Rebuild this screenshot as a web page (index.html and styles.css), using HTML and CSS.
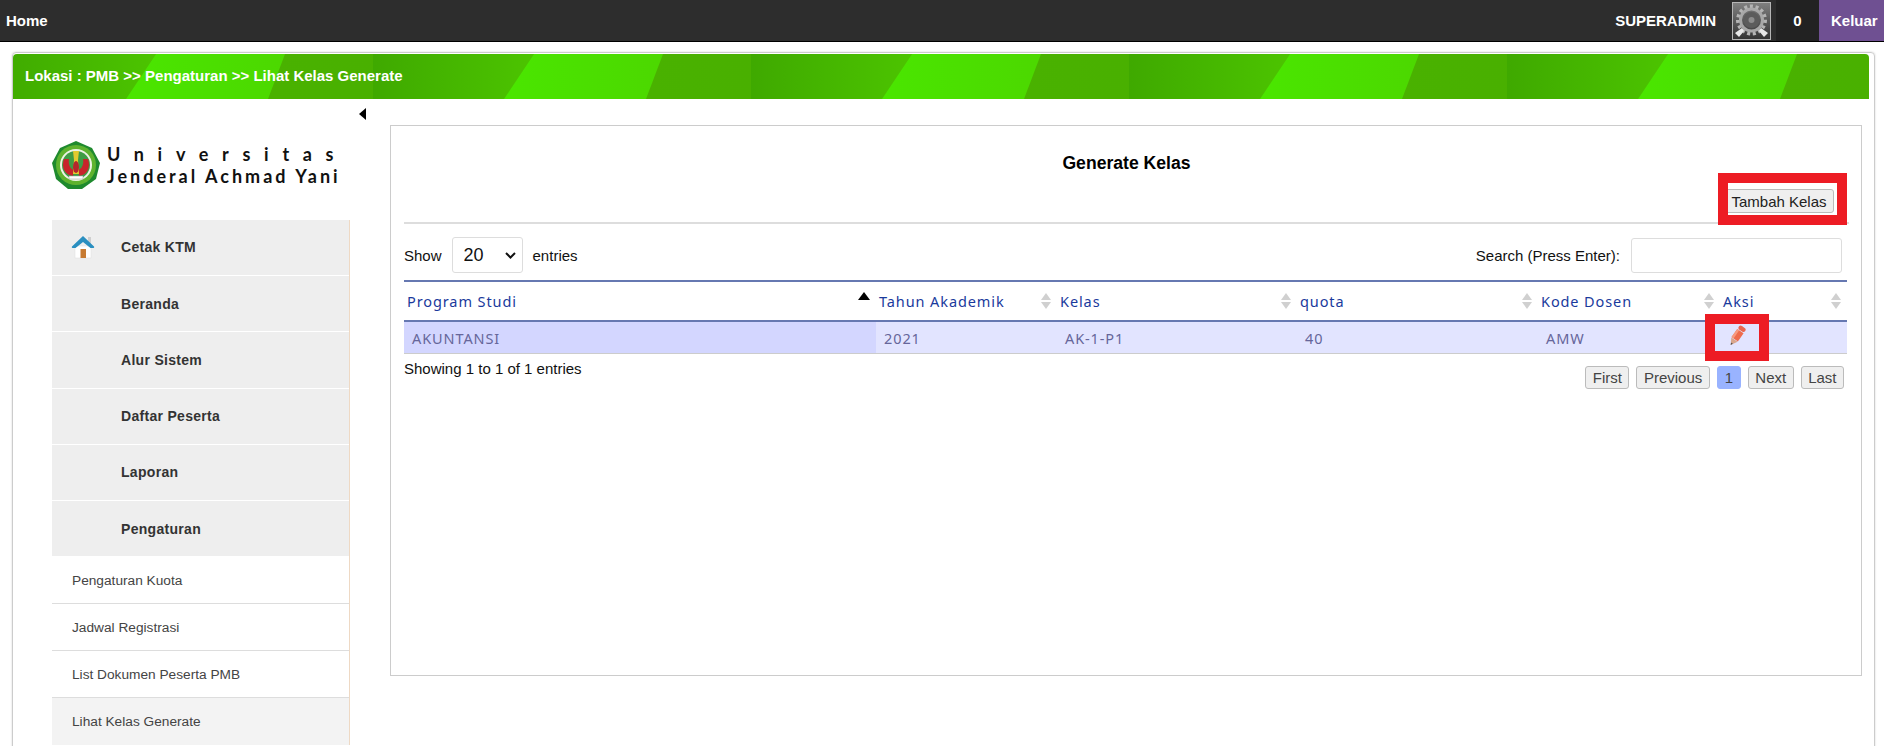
FILE: index.html
```html
<!DOCTYPE html>
<html lang="en">

<head>
   <meta charset="UTF-8">
   <meta name="viewport" content="width=device-width, initial-scale=1.0">
   <title>Lihat Kelas Generate</title>
   <link rel="stylesheet" href="styles.css">
</head>

<body>
   <header class="topbar">
      <a class="home-link">Home</a>
      <div class="user-area">
         <span class="username">SUPERADMIN</span>
         <svg class="gear" width="39" height="38" viewBox="0 0 39 38">
            <defs>
               <linearGradient id="gearBg" x1="0" y1="0" x2="0" y2="1">
                  <stop offset="0" stop-color="#808080" />
                  <stop offset="1" stop-color="#333" />
               </linearGradient>
            </defs>
            <rect x="0.5" y="0.5" width="38" height="37" fill="url(#gearBg)" stroke="#b5b5b5" />
            <circle cx="19.5" cy="18" r="13.5" fill="none" stroke="#b4b4b4" stroke-width="4" stroke-dasharray="3 2.6" />
            <circle cx="19.5" cy="18" r="11" fill="none" stroke="#a8a8a8" stroke-width="3" />
            <circle cx="19.5" cy="18" r="8" fill="#5c5c5c" />
            <circle cx="19.5" cy="18" r="3" fill="#8c8c8c" />
            <path d="M3 31l7-5 2 3-5 6zM36 31l-7-5-2 3 5 6z" fill="#e8e8e8" />
         </svg>
         <span class="notif">0</span>
         <a class="logout">Keluar</a>
      </div>
   </header>

   <div class="card">
      <div class="breadcrumb">Lokasi : PMB &gt;&gt; Pengaturan &gt;&gt; Lihat Kelas Generate</div>

      <div class="main">
         <aside class="side">
            <div class="side-toggle"><span class="arrow-left"></span></div>
            <div class="logo">
               <svg width="50" height="50" viewBox="0 0 50 50">
                  <polygon points="25,1 41,8 49,23 45,39 31,49 17,49 5,39 1,23 9,8" fill="#1f8a2e" />
                  <circle cx="25" cy="25" r="20" fill="#5fb32f" />
                  <circle cx="25" cy="25" r="16" fill="#eef3e6" />
                  <circle cx="25" cy="25" r="14" fill="#3f9c45" />
                  <path d="M13 19c-3 9 1 16 9 17l1-6c-4-1-6-6-5-11zM37 19c3 9-1 16-9 17l-1-6c4-1 6-6 5-11z" fill="#c8242b" />
                  <path d="M22 11h6l-1 9 1 14h-6l1-14z" fill="#e3c92f" />
                  <ellipse cx="25" cy="27" rx="3" ry="6" fill="#b3262b" />
                  <rect x="18" y="36" width="14" height="3" fill="#fff" stroke="#9a9a9a" stroke-width="0.5" />
               </svg>
               <div class="logo-text">
                  <div class="logo-top">Universitas</div>
                  <div class="logo-bottom">Jenderal Achmad Yani</div>
               </div>
            </div>

            <nav class="menu">
               <a class="menu-item">
                  <svg class="menu-icon" width="24" height="24" viewBox="0 0 24 24">
                     <rect x="17" y="2" width="3" height="7" fill="#cfcfcf" />
                     <rect x="4" y="11" width="16" height="12" fill="#fff" stroke="#ddd" stroke-width="0.5" />
                     <rect x="9.500" y="14" width="5.500" height="9" fill="#c77b32" />
                     <path d="M12 1L1 11.500c-.6.8 0 1.500 1 1.500h2.500L12 7l7.500 6H22c1 0 1.600-.7 1-1.500z" fill="#2a8fc0" />
                  </svg>
                  Cetak KTM
               </a>
               <a class="menu-item">Beranda</a>
               <a class="menu-item">Alur Sistem</a>
               <a class="menu-item">Daftar Peserta</a>
               <a class="menu-item">Laporan</a>
               <a class="menu-item">Pengaturan</a>
               <a class="sub-item">Pengaturan Kuota</a>
               <a class="sub-item">Jadwal Registrasi</a>
               <a class="sub-item">List Dokumen Peserta PMB</a>
               <a class="sub-item active">Lihat Kelas Generate</a>
            </nav>
         </aside>

         <section class="content">
            <h2 class="title">Generate Kelas</h2>
            <div class="toolbar">
               <span class="mark mark-btn"><button class="btn" type="button">Tambah Kelas</button></span>
            </div>
            <div class="divider"></div>

            <div class="controls">
               <label class="length">Show
                  <select>
                     <option>20</option>
                  </select>
                  entries
               </label>
               <label class="search">Search (Press Enter):
                  <input type="text">
               </label>
            </div>

            <table class="data">
               <colgroup>
                  <col class="c1">
                  <col class="c2">
                  <col class="c3">
                  <col class="c4">
                  <col class="c5">
                  <col class="c6">
               </colgroup>
               <thead>
                  <tr>
                     <th>
                        <div class="th-in">Program Studi<span class="sort-asc"></span></div>
                     </th>
                     <th>
                        <div class="th-in">Tahun Akademik<span class="sort"></span></div>
                     </th>
                     <th>
                        <div class="th-in">Kelas<span class="sort"></span></div>
                     </th>
                     <th>
                        <div class="th-in">quota<span class="sort"></span></div>
                     </th>
                     <th>
                        <div class="th-in">Kode Dosen<span class="sort"></span></div>
                     </th>
                     <th>
                        <div class="th-in">Aksi<span class="sort"></span></div>
                     </th>
                  </tr>
               </thead>
               <tbody>
                  <tr>
                     <td class="sorted">AKUNTANSI</td>
                     <td>2021</td>
                     <td>AK-1-P1</td>
                     <td>40</td>
                     <td>AMW</td>
                     <td>
                        <span class="mark mark-edit">
                           <svg class="pencil" width="22" height="22" viewBox="0 0 20 20">
                              <g transform="rotate(35 10 10)">
                                 <rect x="6.500" y="0" width="7" height="4" rx="2" fill="#e8664f" />
                                 <rect x="6.500" y="4.600" width="7" height="9" fill="#ee6b4d" />
                                 <rect x="6.500" y="4.600" width="2.200" height="9" fill="#f79a80" />
                                 <path d="M6.500 14h7L10 20z" fill="#d9a58c" />
                                 <path d="M9 18h2l-1 2z" fill="#555" />
                              </g>
                           </svg>
                        </span>
                     </td>
                  </tr>
               </tbody>
            </table>

            <div class="table-foot">
               <div class="info">Showing 1 to 1 of 1 entries</div>
               <div class="pages">
                  <a class="page">First</a>
                  <a class="page">Previous</a>
                  <a class="page current">1</a>
                  <a class="page">Next</a>
                  <a class="page">Last</a>
               </div>
            </div>
         </section>
      </div>
   </div>
</body>

</html>
```

FILE: styles.css
```css
html,
body {
   height: 100%;
   overflow: hidden;
}

body {
   margin: 0;
   font-family: "Liberation Sans", Arial, sans-serif;
   font-size: 15px;
   color: #111;
   background-color: #fff;
}

.topbar {
   display: flex;
   justify-content: space-between;
   align-items: center;
   height: 41px;
   border-bottom: 1px solid #000;
   background-color: #2d2d2d;
   color: #fff;
   font-weight: bold;
}

.home-link {
   padding-left: 6px;
}

.user-area {
   display: flex;
   align-items: center;
   height: 100%;
}

.username {
   margin-right: 16px;
}

.gear {
   margin-right: 5px;
}

.notif {
   display: flex;
   justify-content: center;
   align-items: center;
   width: 43px;
   height: 100%;
   background-color: #222;
}

.logout {
   display: flex;
   align-items: center;
   width: 65px;
   height: 100%;
   padding-left: 12px;
   box-sizing: border-box;
   background-color: #6f5092;
}

.card {
   margin: 10px 9px 0 12px;
   min-height: 800px;
   padding: 1px 5px 0 0;
   border: 1px solid #ccc;
   border-radius: 4px;
   box-shadow: 0 0 2px rgba(0, 0, 0, 0.2);
}

.breadcrumb {
   height: 45px;
   padding-left: 12px;
   line-height: 43px;
   font-weight: bold;
   color: #fff;
   border-radius: 4px 4px 0 0;
   background-color: #4ab400;
   background-image: url("data:image/svg+xml,%3Csvg xmlns='http://www.w3.org/2000/svg' width='378' height='45'%3E%3Cdefs%3E%3ClinearGradient id='a'%3E%3Cstop offset='0' stop-color='%233fa900'/%3E%3Cstop offset='1' stop-color='%234cc400'/%3E%3C/linearGradient%3E%3ClinearGradient id='b'%3E%3Cstop offset='0' stop-color='%234ae600'/%3E%3Cstop offset='1' stop-color='%234cd800'/%3E%3C/linearGradient%3E%3ClinearGradient id='c'%3E%3Cstop offset='0' stop-color='%234ab600'/%3E%3Cstop offset='1' stop-color='%2349b000'/%3E%3C/linearGradient%3E%3C/defs%3E%3Crect width='378' height='45' fill='url(%23c)'/%3E%3Cpolygon points='0,0 161,0 131,45 0,45' fill='url(%23a)'/%3E%3Cpolygon points='161,0 290,0 273,45 131,45' fill='url(%23b)'/%3E%3C/svg%3E");
   background-repeat: repeat-x;
   background-position: -18px 0;
}

.main {
   display: flex;
   align-items: flex-start;
}

.side {
   flex: none;
   width: 377px;
   padding-left: 39px;
   box-sizing: border-box;
}

.side-toggle {
   display: flex;
   height: 32px;
   padding: 9px 0 0 307px;
   box-sizing: border-box;
}

.arrow-left {
   width: 0;
   height: 0;
   border-top: 6px solid transparent;
   border-bottom: 6px solid transparent;
   border-right: 7px solid #000;
}

.logo {
   display: flex;
   align-items: center;
   gap: 6px;
   height: 68px;
   margin-bottom: 21px;
   margin-left: -1px;
   color: #111;
   font-family: Lato, sans-serif;
   font-size: 18px;
   line-height: 22px;
   font-weight: bold;
   white-space: nowrap;
}

.logo-top {
   letter-spacing: 13.7px;
}

.logo-bottom {
   letter-spacing: 3px;
}

.menu {
   width: 298px;
   border-right: 1px solid #eed9c4;
   box-sizing: border-box;
}

.menu-item {
   display: flex;
   align-items: center;
   height: 56.2px;
   padding-left: 69px;
   box-sizing: border-box;
   border-bottom: 1px solid #fff;
   background-color: #eee;
   color: #333;
   font-weight: bold;
   font-size: 14px;
   letter-spacing: 0.3px;
}

.menu-item:first-child {
   padding-bottom: 2px;
}

.menu-icon {
   margin-left: -50px;
   margin-right: 26px;
}

.sub-item {
   display: flex;
   align-items: center;
   height: 47px;
   padding-left: 20px;
   box-sizing: border-box;
   border-bottom: 1px solid #ddd;
   color: #444;
   font-size: 13.7px;
}

.sub-item.active {
   background-color: #f3f3f3;
   border-bottom: 0;
}

.content {
   flex: none;
   width: 1472px;
   height: 551px;
   margin-top: 26px;
   padding: 0 12px 0 13px;
   box-sizing: border-box;
   border: 1px solid #ccc;
}

.title {
   margin: 27px 0 0;
   font-size: 17.6px;
   line-height: 20px;
   text-align: center;
   color: #000;
}

.toolbar {
   display: flex;
   justify-content: flex-end;
   margin-top: 16px;
   padding-right: 15px;
}

.mark {
   position: relative;
   display: inline-block;
}

.mark::after {
   content: "";
   position: absolute;
   border: 10px solid #ed1c24;
   z-index: 2;
}

.mark-btn::after {
   top: -16px;
   right: -13px;
   bottom: -12px;
   left: -6px;
}

.mark-edit {
   margin-left: -2px;
   line-height: 0;
}

.mark-edit::after {
   top: -11px;
   right: -21px;
   bottom: -14px;
   left: -21px;
}

.btn {
   display: block;
   width: 110px;
   height: 24px;
   padding: 0;
   border: 1px solid #bbb;
   border-radius: 3px;
   background-color: #efefef;
   color: #222;
   font-family: inherit;
   font-size: 15px;
}

.divider {
   height: 2px;
   margin-top: 9px;
   background-color: #ddd;
}

.controls {
   display: flex;
   justify-content: space-between;
   height: 36px;
   margin-top: 13px;
   align-items: center;
   padding-right: 7px;
}

.length,
.search {
   display: flex;
   align-items: center;
}

.length select {
   width: 71px;
   height: 36px;
   margin: 0 10px;
   padding-left: 11px;
   border: 1px solid #ddd;
   border-radius: 3px;
   appearance: none;
   background: #fff url("data:image/svg+xml,%3Csvg xmlns='http://www.w3.org/2000/svg' width='11' height='7'%3E%3Cpath d='M1 1l4.500 4.500L10 1' fill='none' stroke='%23111' stroke-width='2'/%3E%3C/svg%3E") no-repeat right 6px center;
   color: #111;
   font-family: inherit;
   font-size: 18px;
}

.search input {
   width: 211px;
   height: 35px;
   margin-left: 11px;
   padding: 0;
   box-sizing: border-box;
   border: 1px solid #ddd;
   border-radius: 3px;
}

.data {
   width: 1443px;
   margin-top: 7px;
   table-layout: fixed;
   border-collapse: collapse;
   font-family: "Noto Sans", sans-serif;
   font-size: 14.5px;
   letter-spacing: 0.9px;
}

.c1 {
   width: 472px;
}

.c2 {
   width: 181px;
}

.c3 {
   width: 240px;
}

.c4 {
   width: 241px;
}

.c5 {
   width: 182px;
}

.c6 {
   width: 127px;
}

.data th {
   height: 38px;
   padding: 0 3px;
   border-top: 2px solid #6678b1;
   border-bottom: 2px solid #6678b1;
   font-weight: normal;
   text-align: left;
   color: #1a3a9c;
}

.th-in {
   display: flex;
   justify-content: space-between;
   align-items: center;
}

.sort,
.sort-asc {
   display: block;
   width: 10px;
   margin-right: 3px;
}

.sort-asc {
   width: 12px;
}

.sort::before,
.sort::after {
   content: "";
   display: block;
   width: 0;
   height: 0;
   border-left: 5px solid transparent;
   border-right: 5px solid transparent;
}

.sort::before {
   border-bottom: 7px solid #d0d0d0;
   margin-bottom: 2px;
}

.sort::after {
   border-top: 7px solid #d0d0d0;
}

.sort-asc::before {
   content: "";
   display: block;
   width: 0;
   height: 0;
   margin-bottom: 10px;
   border-left: 6px solid transparent;
   border-right: 6px solid transparent;
   border-bottom: 8px solid #000;
}

.data td {
   height: 31px;
   padding: 0 8px;
   border-bottom: 1px solid #ccc;
   background-color: #e2e4ff;
   color: #66669a;
}

.data td.sorted {
   background-color: #d3d6ff;
}

.table-foot {
   display: flex;
   justify-content: space-between;
   padding-top: 12px;
   padding-right: 5px;
}

.info {
   margin-top: -7px;
   line-height: 20px;
}

.pages {
   display: flex;
   gap: 7px;
}

.page {
   display: flex;
   align-items: center;
   justify-content: center;
   height: 23px;
   padding: 0 6.5px;
   box-sizing: border-box;
   border: 1px solid #bbb;
   border-radius: 3px;
   background-color: #efefef;
   color: #444;
}

.page.current {
   width: 24px;
   padding: 0;
   border-color: #99b3ff;
   background-color: #99b3ff;
}
```
